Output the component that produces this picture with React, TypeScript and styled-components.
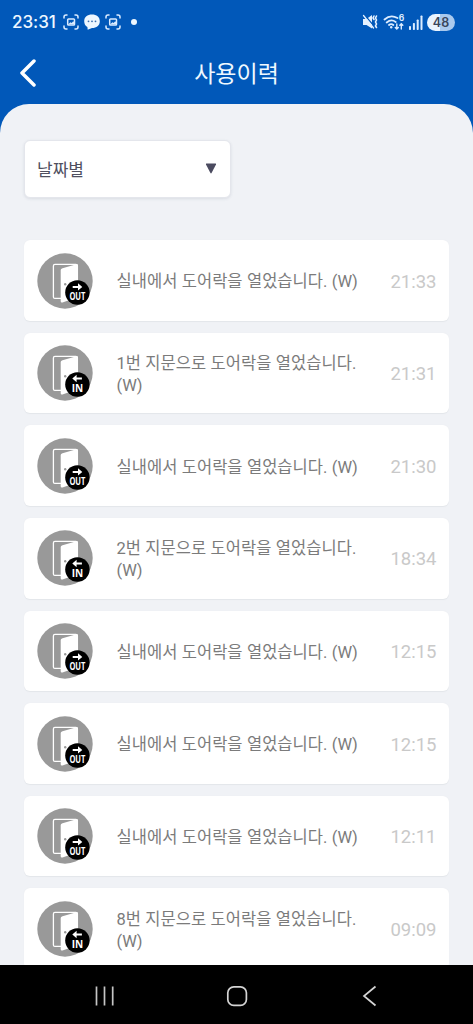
import React from 'react';
import styled, { createGlobalStyle } from 'styled-components';

const GlobalStyle = createGlobalStyle`
  * { box-sizing: border-box; }
  html, body { margin: 0; padding: 0; }
  body {
    background: #0158b9;
    font-family: Roboto, "Noto Sans CJK KR", sans-serif;
  }
`;

const Screen = styled.div`
  width: 473px;
  height: 1024px;
  display: flex;
  flex-direction: column;
  overflow: hidden;
  background: #0158b9;
`;

const StatusBar = styled.div`
  flex: none;
  height: 44px;
  padding: 0 18px 0 12px;
  display: flex;
  align-items: center;
  justify-content: space-between;
  color: #eef7ff;
`;

const StatusGroup = styled.div<{ $gap: number }>`
  display: flex;
  align-items: center;
  gap: ${(p) => p.$gap}px;
  svg { display: block; }
`;

const Clock = styled.span`
  width: 46px;
  font: 500 17px/22px Inter, sans-serif;
  letter-spacing: -0.05px;
  white-space: nowrap;
`;

const Dot = styled.span`
  width: 6px;
  height: 6px;
  margin-left: 5px;
  border-radius: 50%;
  background: #eef7ff;
`;

const Battery = styled.span`
  width: 28px;
  height: 17px;
  border-radius: 9px;
  background: linear-gradient(90deg, #e9f4ff 48%, #a9c9ee 48%);
  color: #39465c;
  font: 600 12.5px/17px Inter, sans-serif;
  text-align: center;
`;

const Header = styled.header`
  flex: none;
  height: 60px;
  display: grid;
  grid-template-columns: 60px 1fr 60px;
  align-items: center;
`;

const BackButton = styled.button`
  height: 58px;
  padding: 0 0 2px 19px;
  border: 0;
  background: none;
  svg { display: block; }
`;

const Title = styled.h1`
  margin: 2px 0 0;
  color: #eff8ff;
  font-size: 23px;
  font-weight: 400;
  line-height: 58px;
  text-align: center;
`;

const Panel = styled.main`
  flex: 1;
  min-height: 0;
  overflow: hidden;
  padding: 36px 24px 0;
  border-radius: 29px 29px 0 0;
  background: #f0f2f6;
`;

const Select = styled.button`
  width: 207px;
  height: 58px;
  padding: 2px 13px 0 12px;
  display: flex;
  align-items: center;
  justify-content: space-between;
  border: 1px solid #e4e6ec;
  border-radius: 6px;
  background: #fff;
  box-shadow: 0 1px 3px rgba(60, 70, 100, 0.12);
  color: #50505f;
  font-family: inherit;
  font-size: 17px;
  line-height: 24px;
  svg { margin-bottom: 3px; }
`;

const List = styled.ul`
  margin: 42.3px 0 0;
  padding: 0;
  list-style: none;
  display: flex;
  flex-direction: column;
  gap: 12.1px;
`;

const Card = styled.li`
  flex: none;
  height: 80.5px;
  padding: 0 12.5px;
  display: grid;
  grid-template-columns: 56px 1fr auto;
  align-items: center;
  border-radius: 6px;
  background: #fff;
  box-shadow: 0 0.5px 1px rgba(120, 125, 135, 0.1);
  svg { display: block; }
`;

const Message = styled.p`
  margin: 3.6px 0 0 24px;
  color: #7b7b7b;
  font-size: 16.5px;
  line-height: 22px;
  letter-spacing: 0.04px;
  word-spacing: 0.2px;
  white-space: pre;
`;

const Time = styled.time`
  margin-top: 2px;
  color: #c9c9c9;
  font-size: 18.5px;
  line-height: 24px;
`;

const NavBar = styled.nav`
  flex: none;
  height: 59px;
  padding: 3px 0 0;
  display: flex;
  align-items: center;
  justify-content: center;
  gap: 110px;
  background: #000;
  svg { display: block; }
`;

const CaptureIcon = () => (
  <svg width="16" height="16" viewBox="0 0 16 16" fill="none" stroke="#dcecff" strokeWidth="1.5" strokeLinecap="round">
    <path d="M1 4V3q0-2 2-2h1M12 1h1q2 0 2 2v1M15 12v1q0 2-2 2h-1M4 15H3q-2 0-2-2v-1" />
    <rect x="4.7" y="5" width="6.8" height="6" rx="0.8" />
    <path d="M5.5 10l2-1.700 1.200.6 1.500-1.600 1 1v2H5.500z" fill="#dcecff" stroke="none" />
  </svg>
);

const ChatIcon = () => (
  <svg width="16" height="16" viewBox="0 0 16 16">
    <path d="M8 .5c4.600 0 7.800 2.400 7.800 6.700S12.500 14 8 14L3.700 15.700 3.400 13C1.300 11.800.2 9.800.2 7.200.2 2.900 3.400.5 8 .5z" fill="#eef7ff" />
    <g fill="#3a6fae">
      <circle cx="4.5" cy="7.3" r="0.9" />
      <circle cx="8" cy="7.3" r="0.9" />
      <circle cx="11.5" cy="7.3" r="0.9" />
    </g>
  </svg>
);

const MuteIcon = () => (
  <svg width="17" height="16" viewBox="0 0 17 16" fill="none" stroke="#e4f1ff" strokeLinecap="round">
    <path d="M1 5h3.500L10 1v13.500L4.500 11H1z" fill="#e4f1ff" stroke="none" />
    <path d="M3 1.500l9 10.500" stroke="#0158b9" strokeWidth="1.200" />
    <path d="M1.500 1.500l10 12.500" strokeWidth="1.300" />
    <path d="M12 2l-1 2 1 1.500M14.500 2l-1 2 1 2-1 2 1 2-1 2 1 1.500" strokeWidth="1.600" />
  </svg>
);

const WifiIcon = () => (
  <svg width="22" height="17" viewBox="0 0 22 17" fill="none" stroke="#dcecff" strokeWidth="1.8" strokeLinecap="round">
    <path d="M1.500 5.500q6-5.500 13-1.500M3.700 8.500q4.500-4 9-.5M6 11q2.200-1.800 4.300 0" />
    <circle cx="8.2" cy="13.2" r="1.2" fill="#dcecff" stroke="none" />
    <path d="M13.800 10v5M12.300 13.600l1.500 1.500 1.500-1.500M18.300 15v-5M16.800 11.300l1.500-1.500 1.500 1.500" strokeWidth="1.4" />
    <text x="15.8" y="7.3" fill="#dcecff" stroke="none" fontFamily="Inter, sans-serif" fontSize="8.5" fontWeight="700">6</text>
  </svg>
);

const SignalIcon = () => (
  <svg width="14" height="15" viewBox="0 0 14 15" fill="#dcecff">
    <rect x="0" y="11" width="2" height="4" rx="0.7" />
    <rect x="3.9" y="8" width="2" height="7" rx="0.7" />
    <rect x="7.7" y="4.5" width="2" height="10.5" rx="0.7" />
    <rect x="11.5" y="0.5" width="2" height="14.5" rx="0.7" />
  </svg>
);

type Direction = 'OUT' | 'IN';

const DoorIcon = ({ direction }: { direction: Direction }) => (
  <svg width="56" height="56" viewBox="0 0 56 56">
    <circle cx="28" cy="28" r="27.7" fill="#999" />
    <rect x="16.4" y="11.4" width="24" height="34" rx="1.5" fill="none" stroke="#fff" strokeWidth="1.3" />
    <path d="M25.500 15.300L39.500 11.300Q41 11 41 12.500V44L25.500 49.500Q23.700 50 23.700 48.200V17Q23.700 15.700 25.500 15.300z" fill="#fff" />
    <circle cx="28.2" cy="31.2" r="1.2" fill="#999" />
    <circle cx="40.4" cy="39.5" r="12.2" fill="#000" />
    {direction === 'OUT' ? (
      <path d="M35.700 33h5.300v-2.800l4.300 3.800-4.300 3.600v-2.700h-5.300z" fill="#fff" />
    ) : (
      <path d="M44.900 32.600h-5.300v-2.800l-4.300 3.800 4.300 3.600v-2.700h5.300z" fill="#fff" />
    )}
    <text
      x="40.4"
      y={direction === 'OUT' ? 46.7 : 47}
      fill="#fff"
      textAnchor="middle"
      fontFamily='"Open Sans", sans-serif'
      fontWeight="700"
      fontSize={direction === 'OUT' ? 10 : 10.8}
      textLength={direction === 'OUT' ? 16 : 11.5}
      lengthAdjust="spacingAndGlyphs"
    >
      {direction}
    </text>
  </svg>
);

const INSIDE = '실내에서 도어락을 열었습니다. (W)';
const fingerprint = (n: number) => `${n}번 지문으로 도어락을 열었습니다.\n(W)`;

const history: { direction: Direction; message: string; time: string }[] = [
  { direction: 'OUT', message: INSIDE, time: '21:33' },
  { direction: 'IN', message: fingerprint(1), time: '21:31' },
  { direction: 'OUT', message: INSIDE, time: '21:30' },
  { direction: 'IN', message: fingerprint(2), time: '18:34' },
  { direction: 'OUT', message: INSIDE, time: '12:15' },
  { direction: 'OUT', message: INSIDE, time: '12:15' },
  { direction: 'OUT', message: INSIDE, time: '12:11' },
  { direction: 'IN', message: fingerprint(8), time: '09:09' },
];

export default function App() {
  return (
    <Screen>
      <GlobalStyle />
      <StatusBar>
        <StatusGroup $gap={5}>
          <Clock>23:31</Clock>
          <CaptureIcon />
          <ChatIcon />
          <CaptureIcon />
          <Dot />
        </StatusGroup>
        <StatusGroup $gap={4}>
          <MuteIcon />
          <WifiIcon />
          <SignalIcon />
          <Battery>48</Battery>
        </StatusGroup>
      </StatusBar>
      <Header>
        <BackButton aria-label="뒤로">
          <svg width="18" height="28" viewBox="0 0 18 28" fill="none" stroke="#fff" strokeWidth="3.5" strokeLinecap="round" strokeLinejoin="round">
            <path d="M15 2L3 14l12 12" />
          </svg>
        </BackButton>
        <Title>사용이력</Title>
      </Header>
      <Panel>
        <Select>
          날짜별
          <svg width="12" height="11" viewBox="0 0 12 11">
            <path d="M1.500.5h9q1 0 .5 1L6.700 9.800Q6 11 5.300 9.800L1 1.500Q.5.5 1.500.5z" fill="#4b4b60" />
          </svg>
        </Select>
        <List>
          {history.map((item, i) => (
            <Card key={i}>
              <DoorIcon direction={item.direction} />
              <Message>{item.message}</Message>
              <Time>{item.time}</Time>
            </Card>
          ))}
        </List>
      </Panel>
      <NavBar>
        <svg width="22" height="22" viewBox="0 0 22 22" stroke="#c4c4c4" strokeWidth="1.7">
          <path d="M2.500 1.500v19M10.500 1.500v19M18.700 1.500v19" />
        </svg>
        <svg width="22" height="22" viewBox="0 0 22 22" fill="none" stroke="#d4d4d4" strokeWidth="1.7">
          <rect x="1.8" y="1.8" width="18.6" height="18.6" rx="6" />
        </svg>
        <svg width="22" height="22" viewBox="0 0 22 22" fill="none" stroke="#d4d4d4" strokeWidth="1.7">
          <path d="M17.500 1.500L6 11 17.500 20.500" />
        </svg>
      </NavBar>
    </Screen>
  );
}
